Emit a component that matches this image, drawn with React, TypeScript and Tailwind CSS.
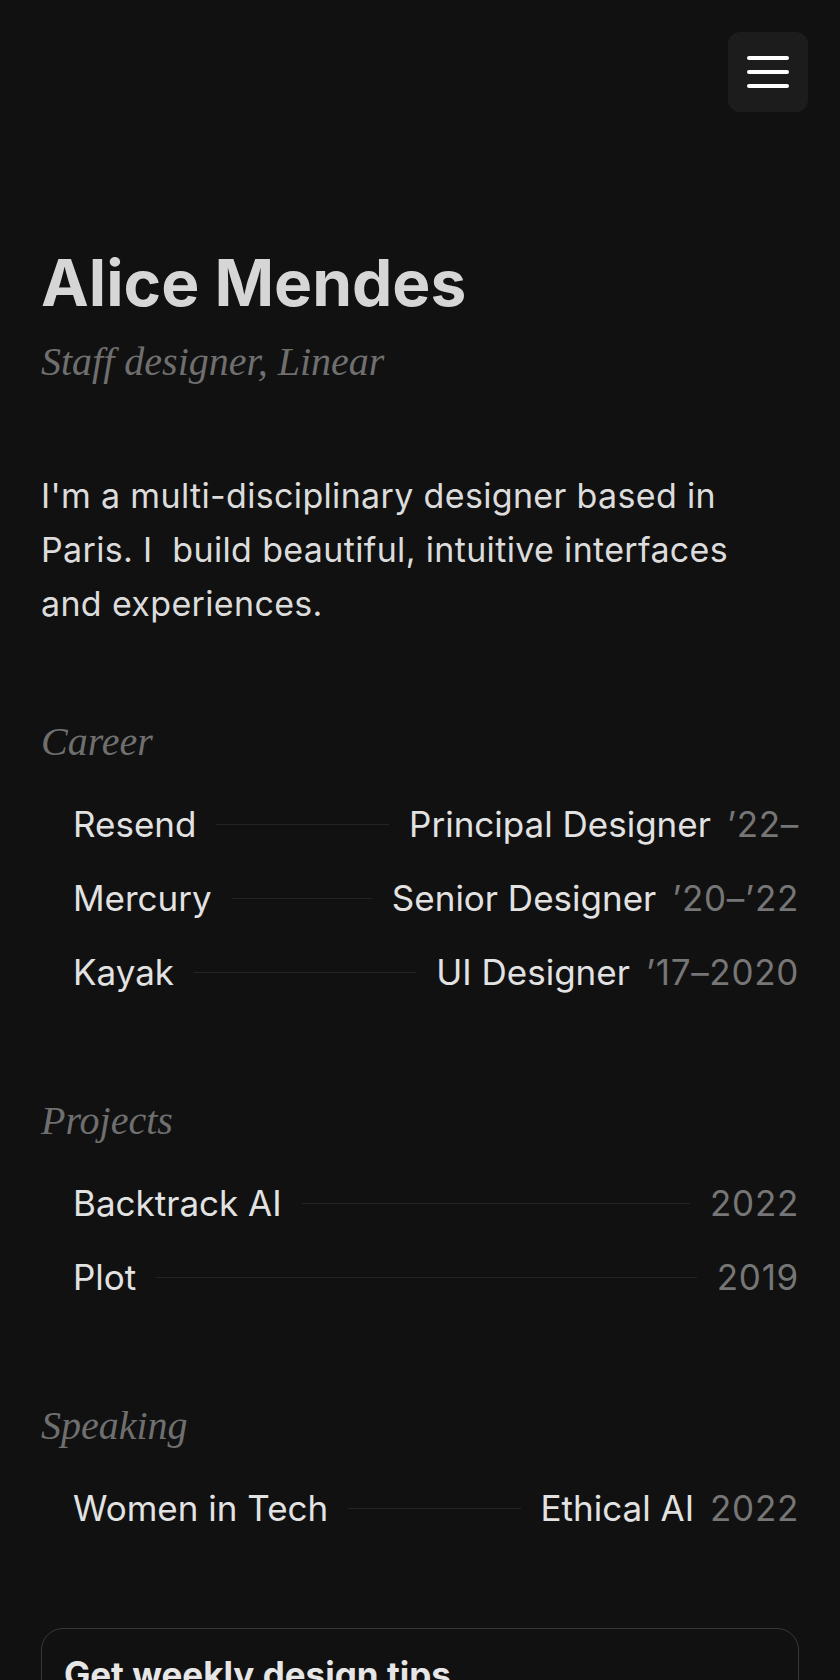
import React from "react";

type Row = { name: string; role?: string; year: string };

const career: Row[] = [
  { name: "Resend", role: "Principal Designer", year: "’22–" },
  { name: "Mercury", role: "Senior Designer", year: "’20–’22" },
  { name: "Kayak", role: "UI Designer", year: "’17–2020" },
];

const projects: Row[] = [
  { name: "Backtrack AI", year: "2022" },
  { name: "Plot", year: "2019" },
];

const speaking: Row[] = [{ name: "Women in Tech", role: "Ethical AI", year: "2022" }];

const serif = "font-['Liberation_Serif',serif] italic";

function Section({ title, rows, first }: { title: string; rows: Row[]; first?: boolean }) {
  return (
    <section className={first ? "mt-[88px]" : "mt-[89px]"}>
      <h2 className={`${serif} text-[40px] leading-[46px] text-[#6f6f6f]`}>{title}</h2>
      <ul className="mt-[22px]">
        {rows.map((r) => (
          <li key={r.name} className="flex h-[74px] items-center gap-5 pl-8 text-[35px] text-[#e2e2e2]">
            <span className="whitespace-nowrap">{r.name}</span>
            <span className="h-px flex-1 bg-[#242424]" />
            <span className="flex items-center gap-4 whitespace-nowrap">
              {r.role && <span>{r.role}</span>}
              <span className="tracking-[0.02em] text-[#767676]">{r.year}</span>
            </span>
          </li>
        ))}
      </ul>
    </section>
  );
}

export default function App() {
  return (
    <div className="min-h-screen bg-[#111111] font-['Inter',sans-serif] antialiased">
      <header className="flex justify-end px-8 pt-8">
        <button className="flex h-20 w-20 flex-col items-center justify-center gap-[10px] rounded-xl bg-[#1c1c1c]">
          <span className="h-1 w-[42px] rounded-full bg-white" />
          <span className="h-1 w-[42px] rounded-full bg-white" />
          <span className="h-1 w-[42px] rounded-full bg-white" />
        </button>
      </header>

      <main className="px-[41px] pb-16">
        <h1 className="mt-[139px] text-[64px] font-bold leading-none text-[#d6d6d6]">Alice Mendes</h1>
        <p className={`${serif} mt-6 text-[40px] leading-[46px] text-[#6f6f6f]`}>Staff designer, Linear</p>

        <p className="mt-[84px] max-w-[740px] text-[34px] leading-[54px] tracking-[0.01em] text-[#dcdcdc]">
          I'm a multi-disciplinary designer based in Paris. I{"\u00a0"} build beautiful, intuitive interfaces and experiences.
        </p>

        <Section title="Career" rows={career} first />
        <Section title="Projects" rows={projects} />
        <Section title="Speaking" rows={speaking} />

        <div className="mt-[83px] rounded-[22px] border border-[#383838] px-[22px] pt-6 pb-8">
          <h3 className="text-[35px] font-bold leading-[1.2] text-[#e6e6e6]">Get weekly design tips</h3>
          <p className="mt-3 text-[28px] leading-[1.5] text-[#8a8a8a]">
            One short email a week on craft, process and tools.
          </p>
          <div className="mt-6 flex gap-3">
            <input
              className="h-16 flex-1 rounded-xl border border-[#2e2e2e] bg-[#181818] px-5 text-[28px] text-[#e6e6e6] placeholder:text-[#5a5a5a]"
              placeholder="you@email.com"
            />
            <button className="h-16 rounded-xl bg-[#e6e6e6] px-6 text-[28px] font-semibold text-[#111111]">Subscribe</button>
          </div>
        </div>
      </main>
    </div>
  );
}
